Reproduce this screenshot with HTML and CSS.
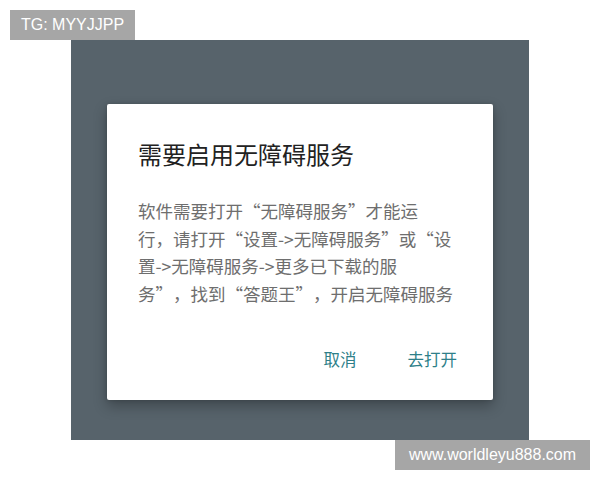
FILE: index.html
```html
<!DOCTYPE html>
<html lang="zh-CN">
<head>
<meta charset="utf-8">
<link rel="stylesheet" href="styles.css">
</head>
<body>
<div class="screen">
  <div class="dialog">
    <div class="title">需要启用无障碍服务</div>
    <div class="message">
      <span class="line">软件需要打开“无障碍服务”才能运</span>
      <span class="line">行，请打开“设置-&gt;无障碍服务”或“设</span>
      <span class="line">置-&gt;无障碍服务-&gt;更多已下载的服</span>
      <span class="line">务”，找到“答题王”，开启无障碍服务</span>
    </div>
    <div class="actions">
      <span class="btn">取消</span>
      <span class="btn">去打开</span>
    </div>
  </div>
</div>
<div class="wm wm-top">TG: MYYJJPP</div>
<div class="wm wm-bottom">www.worldleyu888.com</div>
</body>
</html>
```

FILE: styles.css
```css
html, body {
  margin: 0;
  padding: 0;
  background: #ffffff;
  width: 600px;
  height: 480px;
  overflow: hidden;
}
body {
  font-family: "Noto Sans CJK SC", "Noto Sans", sans-serif;
  text-spacing-trim: space-all;
}
.screen {
  margin: 40px 0 0 71px;
  width: 458px;
  height: 400px;
  background: #57636b;
  padding: 64px 0 0 36px;
  box-sizing: border-box;
}
.dialog {
  width: 386px;
  height: 296px;
  background: #ffffff;
  border-radius: 2px;
  box-shadow: 0 6px 14px rgba(0, 0, 0, 0.28), 0 0 4px rgba(0, 0, 0, 0.15);
  padding: 34px 31px 0 31px;
  box-sizing: border-box;
  display: flex;
  flex-direction: column;
}
.title {
  font-size: 24px;
  line-height: 32px;
  color: #222222;
  white-space: nowrap;
}
.message {
  margin-top: 27px;
  font-size: 17.5px;
  line-height: 27.5px;
  color: #6e6e6e;
  display: flex;
  flex-direction: column;
  text-spacing-trim: space-all;
}
.line {
  white-space: nowrap;
}
.actions {
  margin-top: 40px;
  display: flex;
  justify-content: flex-end;
  gap: 51px;
  padding-right: 5px;
}
.btn {
  font-size: 16.5px;
  line-height: 24px;
  color: #2e7f89;
}
.wm {
  position: absolute;
  background: #a6a6a6;
  color: #ffffff;
  font-family: "Liberation Sans", Arial, sans-serif;
  font-size: 16px;
  box-sizing: border-box;
  display: flex;
  align-items: center;
  justify-content: center;
}
.wm-top {
  left: 10px;
  top: 10px;
  width: 125px;
  height: 30px;
}
.wm-bottom {
  left: 395px;
  top: 440px;
  width: 195px;
  height: 30px;
}
```
